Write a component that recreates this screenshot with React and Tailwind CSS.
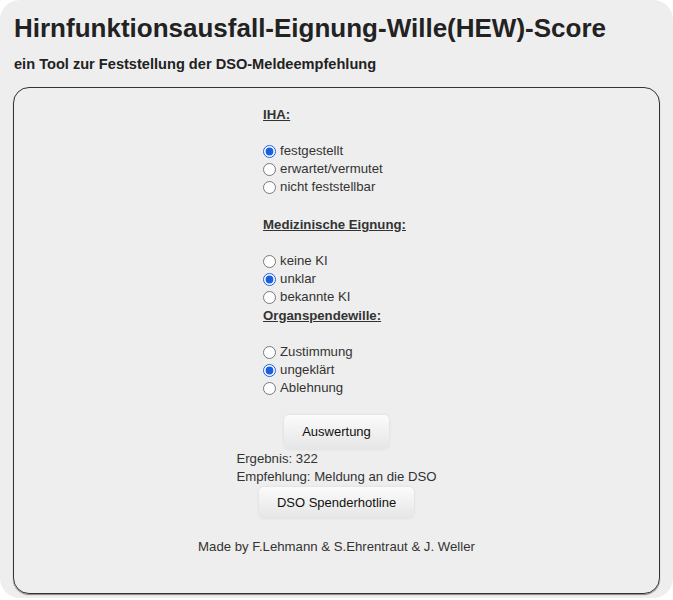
import { useState } from "react";

const groups = [
  {
    key: "iha",
    title: "IHA:",
    options: ["festgestellt", "erwartet/vermutet", "nicht feststellbar"],
  },
  {
    key: "eignung",
    title: "Medizinische Eignung:",
    options: ["keine KI", "unklar", "bekannte KI"],
  },
  {
    key: "wille",
    title: "Organspendewille:",
    options: ["Zustimmung", "ungeklärt", "Ablehnung"],
  },
];

function RadioGroup({ group, value, onChange, className = "" }) {
  return (
    <div className={className}>
      <div className="h-[18px] leading-[18px] font-bold underline">{group.title}</div>
      <div className="h-[18px]" />
      {group.options.map((opt) => (
        <label key={opt} className="flex h-[18px] items-center gap-[4px] leading-[18px]">
          <input
            type="radio"
            name={group.key}
            checked={value === opt}
            onChange={() => onChange(opt)}
            className="h-[13px] w-[13px] accent-[#1a5fdc]"
          />
          <span>{opt}</span>
        </label>
      ))}
    </div>
  );
}

function Button({ children, className = "", ...props }) {
  return (
    <button
      className={`rounded-[5px] bg-gradient-to-b from-[#fbfbfb] to-[#e6e6e6] px-[18px] text-[13px] text-[#111] shadow-[0_0_3px_rgba(0,0,0,0.1)] ${className}`}
      {...props}
    >
      {children}
    </button>
  );
}

export default function App() {
  const [answers, setAnswers] = useState({
    iha: "festgestellt",
    eignung: "unklar",
    wille: "ungeklärt",
  });

  return (
    <div className="min-h-screen bg-white font-['Liberation_Sans',Arial,sans-serif] text-[#333]">
      <div className="h-[598px] rounded-[20px] bg-[#eeeeee] px-[13px] pt-[13px]">
        <h1 className="ml-[1px] text-[26px] leading-[30px] font-bold text-[#222]">
          Hirnfunktionsausfall-Eignung-Wille(HEW)-Score
        </h1>
        <h2 className="mt-[13px] ml-[1px] text-[14.6px] leading-[17px] font-bold text-[#222]">
          ein Tool zur Feststellung der DSO-Meldeempfehlung
        </h2>

        <div className="mt-[14px] h-[507px] rounded-[16px] border border-[#333] pt-[18px] text-[13.2px] shadow-[0_1px_1px_rgba(0,0,0,0.45)]">
          <div className="flex flex-col items-center">
            <div className="mr-[4px] text-left">
              <RadioGroup
                group={groups[0]}
                value={answers.iha}
                onChange={(v) => setAnswers({ ...answers, iha: v })}
              />
              <RadioGroup
                className="mt-[20px]"
                group={groups[1]}
                value={answers.eignung}
                onChange={(v) => setAnswers({ ...answers, eignung: v })}
              />
              <RadioGroup
                className="mt-[1px]"
                group={groups[2]}
                value={answers.wille}
                onChange={(v) => setAnswers({ ...answers, wille: v })}
              />
            </div>

            <Button className="mt-[18px] h-[34px]">Auswertung</Button>

            <div className="mt-[1px] text-left leading-[18px]">
              <div>Ergebnis: 322</div>
              <div>Empfehlung: Meldung an die DSO</div>
            </div>

            <Button className="mt-[1px] h-[31px]">DSO Spenderhotline</Button>

            <div className="mt-[20px] leading-[18px]">
              Made by F.Lehmann &amp; S.Ehrentraut &amp; J. Weller
            </div>
          </div>
        </div>
      </div>
    </div>
  );
}
